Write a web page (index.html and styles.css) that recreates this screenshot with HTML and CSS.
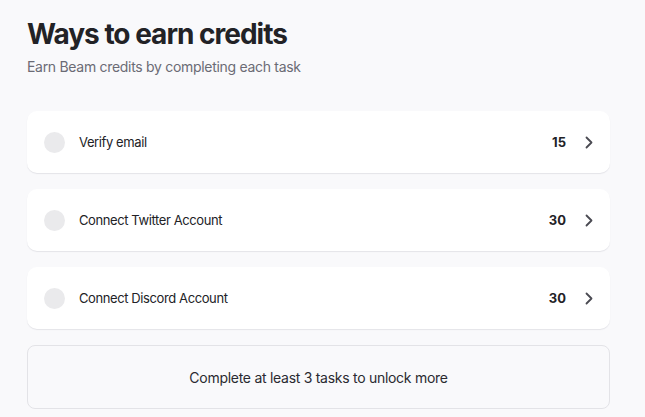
FILE: index.html
```html
<!DOCTYPE html>
<html lang="en">
<head>
    <meta charset="UTF-8">
    <title>Ways to earn credits</title>
    <link rel="stylesheet" href="styles.css">
</head>
<body>

    <div class="earn">
        <h1>Ways to earn credits</h1>
        <p class="subtitle">Earn Beam credits by completing each task</p>

        <div class="tasks">
            <div class="task">
                <span class="dot"></span>
                <span class="task_name">Verify email</span>
                <span class="points">15</span>
                <svg class="chevron" width="8" height="13" viewBox="0 0 8 13"><path d="M1.5 1.5l5 5-5 5" fill="none" stroke="#4a4a52" stroke-width="1.8" stroke-linecap="round" stroke-linejoin="round"/></svg>
            </div>
            <div class="task">
                <span class="dot"></span>
                <span class="task_name">Connect Twitter Account</span>
                <span class="points">30</span>
                <svg class="chevron" width="8" height="13" viewBox="0 0 8 13"><path d="M1.5 1.5l5 5-5 5" fill="none" stroke="#4a4a52" stroke-width="1.8" stroke-linecap="round" stroke-linejoin="round"/></svg>
            </div>
            <div class="task">
                <span class="dot"></span>
                <span class="task_name">Connect Discord Account</span>
                <span class="points">30</span>
                <svg class="chevron" width="8" height="13" viewBox="0 0 8 13"><path d="M1.5 1.5l5 5-5 5" fill="none" stroke="#4a4a52" stroke-width="1.8" stroke-linecap="round" stroke-linejoin="round"/></svg>
            </div>
            <div class="locked">Complete at least 3 tasks to unlock more</div>
        </div>
    </div>

</body>
</html>
```

FILE: styles.css
```css
body {
    margin: 0;
    font-family: Inter, 'Noto Sans', sans-serif;
    background: #f9f9fb;
    color: #1f1f24;
}

.earn {
    padding: 17px 35px 0 27px;
}

h1 {
    margin: 0;
    font-size: 28px;
    font-weight: 700;
    letter-spacing: -1px;
    line-height: 34px;
    color: #222226;
}

.subtitle {
    margin: 7px 0 0;
    font-size: 14px;
    line-height: 18px;
    letter-spacing: -0.3px;
    color: #6b6b75;
}

.tasks {
    margin-top: 35px;
    display: flex;
    flex-direction: column;
    gap: 16px;
}

.task {
    display: flex;
    align-items: center;
    height: 62px;
    padding: 0 17px 0 17px;
    background: #fff;
    border-radius: 10px;
    box-shadow: 0 1px 1px #e4e4e8;
}

.dot {
    width: 21px;
    height: 21px;
    border-radius: 50%;
    background: #eaeaec;
    margin-right: 14px;
}

.task_name {
    flex: 1;
    font-size: 13px;
    letter-spacing: -0.4px;
    color: #222226;
}

.points {
    font-size: 13px;
    font-weight: 700;
    color: #222226;
    margin-right: 19px;
}

.chevron {
    display: block;
}

.locked {
    height: 62px;
    border: 1px solid #e3e3e7;
    border-radius: 8px;
    display: flex;
    align-items: center;
    justify-content: center;
    font-size: 14px;
    letter-spacing: -0.28px;
    color: #2a2a30;
}
```
